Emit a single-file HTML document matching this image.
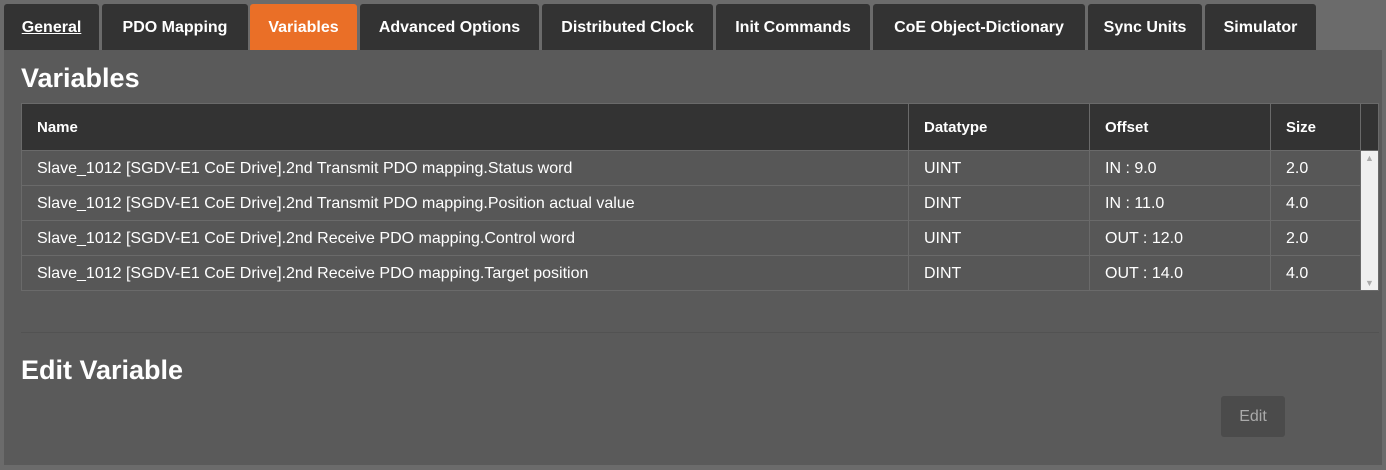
<!DOCTYPE html>
<html><head><style>
body{margin:0;width:1386px;height:470px;background:#6b6b6b;font-family:"Liberation Sans",sans-serif;overflow:hidden;position:relative;color:#fff}
.tab{position:absolute;top:4px;height:46px;background:#333;border-radius:3px 3px 0 0;font-weight:bold;font-size:16px;line-height:48px;text-align:center;color:#fff}
.panel{position:absolute;left:4px;top:50px;width:1378px;height:415px;background:#5a5a5a}
h1{position:absolute;margin:0;font-size:27px;font-weight:bold;color:#fff}
table{position:absolute;left:21px;top:103px;border-collapse:collapse;font-size:16px}
td,th{border:1px solid #6a6a6a;padding:0 0 0 15px;text-align:left;box-sizing:border-box}
th{background:#333;height:47px;font-weight:bold;font-size:15px}
td{background:#575757;height:35px;padding-top:2px}
</style></head><body>
<div class="tab" style="left:4px;width:95px;text-decoration:underline">General</div>
<div class="tab" style="left:102px;width:146px">PDO Mapping</div>
<div class="tab" style="left:250px;width:107px;background:#ea6f27">Variables</div>
<div class="tab" style="left:360px;width:179px">Advanced Options</div>
<div class="tab" style="left:542px;width:171px">Distributed Clock</div>
<div class="tab" style="left:716px;width:154px">Init Commands</div>
<div class="tab" style="left:873px;width:212px">CoE Object-Dictionary</div>
<div class="tab" style="left:1088px;width:114px">Sync Units</div>
<div class="tab" style="left:1205px;width:111px">Simulator</div>
<div class="panel"></div>
<h1 style="left:21px;top:63px">Variables</h1>
<table>
<tr><th style="width:887px">Name</th><th style="width:181px">Datatype</th><th style="width:181px">Offset</th><th style="width:90px">Size</th><th style="width:18px;background:#333"></th></tr>
<tr><td>Slave_1012 [SGDV-E1 CoE Drive].2nd Transmit PDO mapping.Status word</td><td>UINT</td><td>IN : 9.0</td><td>2.0</td><td rowspan="4" style="background:#f0f0f0;padding:0;position:relative"><span style="position:absolute;top:2px;left:4px;color:#aaa;font-size:9px">▲</span><span style="position:absolute;bottom:2px;left:4px;color:#aaa;font-size:9px">▼</span></td></tr>
<tr><td>Slave_1012 [SGDV-E1 CoE Drive].2nd Transmit PDO mapping.Position actual value</td><td>DINT</td><td>IN : 11.0</td><td>4.0</td></tr>
<tr><td>Slave_1012 [SGDV-E1 CoE Drive].2nd Receive PDO mapping.Control word</td><td>UINT</td><td>OUT : 12.0</td><td>2.0</td></tr>
<tr><td>Slave_1012 [SGDV-E1 CoE Drive].2nd Receive PDO mapping.Target position</td><td>DINT</td><td>OUT : 14.0</td><td>4.0</td></tr>
</table>
<div style="position:absolute;left:21px;top:332px;width:1358px;height:1px;background:#525252"></div>
<h1 style="left:21px;top:355px">Edit Variable</h1>
<div style="position:absolute;left:1221px;top:396px;width:64px;height:41px;background:#4b4b4b;border-radius:3px;color:#aaa;font-size:16px;line-height:42px;text-align:center">Edit</div>
</body></html>
